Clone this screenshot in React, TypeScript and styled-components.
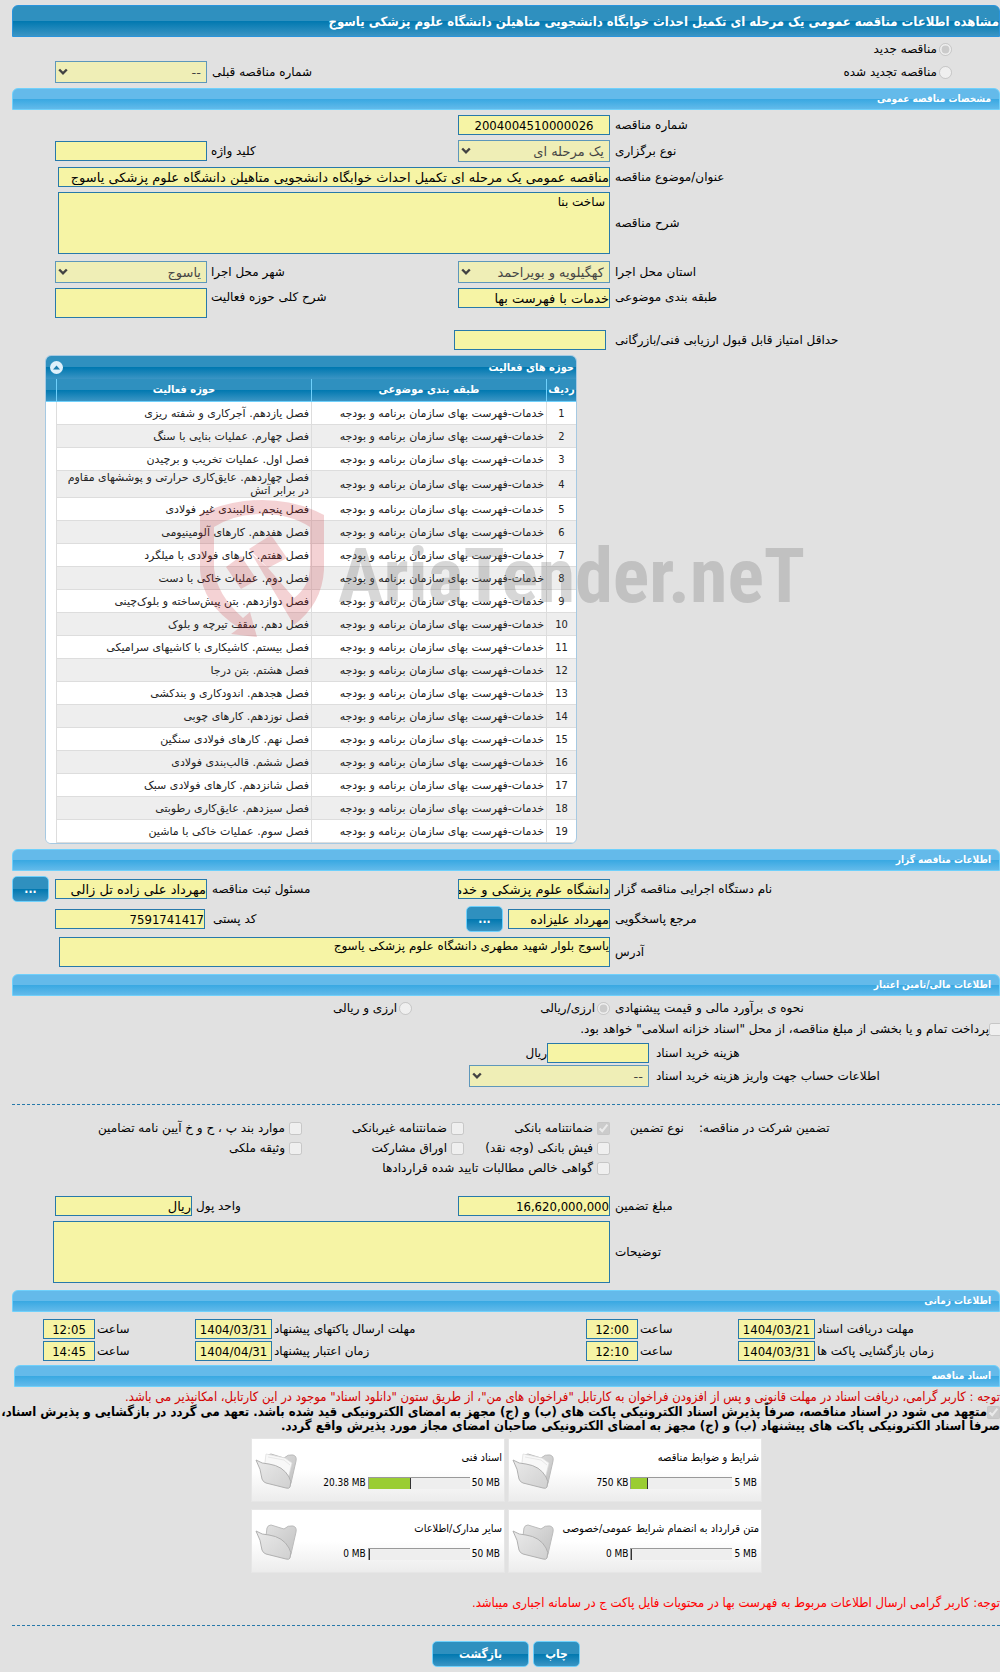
import React, { useId } from 'react';
import styled, { createGlobalStyle, css } from 'styled-components';

const condensed = '"DejaVu Sans Condensed", "DejaVu Sans", Tahoma, sans-serif';
const regular = '"DejaVu Sans", Tahoma, sans-serif';

const GlobalStyle = createGlobalStyle`
  *, *::before, *::after { box-sizing: border-box; }
  body {
    margin: 0;
    background: #e1e1e1;
    color: #000;
    font: 12px/16px ${condensed};
  }
  input[type='radio'], input[type='checkbox'] { margin: 0; flex: none; width: 13px; height: 13px; }
`;

const deepBlue = 'linear-gradient(#2f90bf 50%, #0078b0 50%, #3b95c4)';
const skyBlue = 'linear-gradient(#64baea 50%, #38a8e2 50%, #62baea)';

const Page = styled.main`
  position: relative;
  overflow: hidden;
  padding: 5px 0 5px 12px;
`;

const TitleBar = styled.h1`
  margin: 0;
  height: 32px;
  line-height: 32px;
  font-size: 13px;
  color: #fff;
  white-space: nowrap;
  background: ${deepBlue};
  border: 1px solid #2a94dc;
  border-radius: 6px 6px 0 0;
`;

const SectionBar = styled.h2<{ $inset?: boolean }>`
  margin: 0 0 0 ${(p) => (p.$inset ? 2 : 0)}px;
  height: 22px;
  padding: 0 8px;
  line-height: 20px;
  font-size: 10px;
  color: #fff;
  background: ${skyBlue};
  border: 1px solid #6fd0fb;
  border-radius: 6px 6px 0 0;
`;

const Section = styled.section<{ $top?: number; $bottom?: number }>`
  padding: ${(p) => p.$top ?? 5}px 0 ${(p) => p.$bottom ?? 5}px;
`;

const Row = styled.div<{ $after?: number; $top?: boolean }>`
  display: grid;
  grid-template-columns: minmax(0, 390fr) 152px minmax(0, 251fr) 152px 43px;
  align-items: ${(p) => (p.$top ? 'start' : 'center')};
  margin-bottom: ${(p) => p.$after ?? 5}px;
`;

const Label = styled.label<{ $gap?: number }>`
  text-align: left;
  white-space: nowrap;
  font-family: ${regular};
  font-size: 12px;
  line-height: 18px;
  padding-left: ${(p) => p.$gap ?? 5}px;
`;

const Heading = styled.span`
  white-space: nowrap;
  font-family: ${regular};
  font-size: 12px;
`;

const fieldLook = css`
  display: block;
  margin: 0;
  color: #000;
  background: #f6f4a5;
  border: 1px solid #2779aa;
  border-radius: 0;
  outline: none;
  font-family: ${regular};
  font-size: 13px;
`;

const TextBox = styled.input<{ $width?: number; $center?: boolean; $digits?: boolean }>`
  ${fieldLook}
  flex: none;
  width: ${(p) => (p.$width ? `${p.$width}px` : '100%')};
  height: 20px;
  padding: 0;
  font-family: ${(p) => (p.$digits ? condensed : regular)};
  text-align: ${(p) => (p.$center ? 'center' : 'right')};
`;

const TextArea = styled.textarea<{ $tall?: boolean }>`
  ${fieldLook}
  width: 100%;
  height: ${(p) => (p.$tall ? 62 : 30)}px;
  padding: ${(p) => (p.$tall ? '1px 4px' : '0')};
  font-size: 12px;
  line-height: 16px;
  resize: none;
`;

const Wide = styled.div<{ $left: number }>`
  grid-column: 2 / 6;
  padding-left: ${(p) => p.$left}px;
`;

const SelectFrame = styled.span<{ $width?: number }>`
  position: relative;
  display: block;
  width: ${(p) => (p.$width ? `${p.$width}px` : '100%')};
  opacity: 0.7;
  svg { position: absolute; left: 3px; top: 7px; }
`;

const SelectBox = styled.select`
  ${fieldLook}
  appearance: none;
  width: 100%;
  height: 22px;
  padding: 0 5px;
  opacity: 1;
`;

const Choice = styled.label<{ $gap?: number }>`
  display: flex;
  align-items: center;
  gap: ${(p) => p.$gap ?? 2}px;
  white-space: nowrap;
  font-family: ${regular};
  font-size: 12px;
`;

const Choices = styled.div`
  display: flex;
  height: 20px;
  margin-bottom: 2px;
  padding-right: 48px;
`;

const Button = styled.button<{ $width: number }>`
  width: ${(p) => p.$width}px;
  height: 26px;
  padding: 0;
  flex: none;
  color: #fff;
  font: bold 12px/20px ${condensed};
  background: ${deepBlue};
  border: 1px solid #6fd0fb;
  border-radius: 5px;
`;

const Dashes = styled.hr`
  margin: 0;
  border: 0;
  border-top: 1px dashed #2779aa;
`;

/* activity table */
const Panel = styled.div`
  width: 532px;
  margin: 5px auto 0 33px;
  overflow: hidden;
  background: #fff;
  border: 1px solid #a6c9e2;
  border-radius: 6px;
`;

const PanelTitle = styled.div`
  display: flex;
  align-items: center;
  justify-content: space-between;
  height: 23px;
  padding: 0 2px 0 4px;
  font-size: 11px;
  font-weight: bold;
  color: #fff;
  background: ${deepBlue};
`;

const Collapse = styled.button`
  display: flex;
  width: 13px;
  height: 13px;
  padding: 0;
  align-items: center;
  justify-content: center;
  background: #dff0fb;
  border: 0;
  border-radius: 50%;
`;

const Table = styled.table`
  width: 100%;
  table-layout: fixed;
  border-collapse: separate;
  border-spacing: 0;
  font-family: ${regular};
  font-size: 11px;
  line-height: 13px;
  color: #222;
  th {
    height: 23px;
    padding: 0 0 2px;
    font-family: ${condensed};
    font-size: 11px;
    color: #fff;
    background: ${deepBlue};
    border-left: 1px solid #6fd0fb;
    border-bottom: 1px solid #6fd0fb;
  }
  td {
    height: 23px;
    padding: 0 2px;
    border-left: 1px solid #ddd;
    border-bottom: 1px solid #ddd;
  }
  tbody tr:nth-child(even) td { background: #eee; }
  th:last-child, td:last-child { border-left: 0; }
  tbody td:last-child, tbody tr:nth-child(even) td:last-child { background: #fff; border-bottom: 0; }
  td:first-child { text-align: center; font-family: ${condensed}; }
`;

/* dates */
const DateRow = styled.div`
  display: grid;
  grid-template-columns: minmax(0, 185fr) 77px 100px 52px minmax(0, 314fr) 77px 100px 52px 31px;
  align-items: center;
  margin-bottom: 2px;
`;

/* documents */
const Notice = styled.p<{ $strong?: boolean }>`
  margin: 0;
  color: ${(p) => (p.$strong ? '#f00' : '#d40000')};
  font-size: 13px;
  line-height: 16px;
  white-space: nowrap;
`;

const Pledge = styled.label`
  display: block;
  margin-left: -16px;
  font-size: 13px;
  font-weight: bold;
  line-height: 14px;
  input[type='checkbox'] { vertical-align: bottom; }
`;

const Cards = styled.div`
  display: grid;
  grid-template-columns: 254px 254px;
  gap: 7px 3px;
  margin: 5px 238px 0 0;
`;

const Card = styled.article`
  display: grid;
  grid-template-columns: minmax(0, 1fr) 50px;
  grid-template-rows: 33px 18px;
  height: 64px;
  padding: 2px 2px 0 0;
  background: linear-gradient(#fff 50%, #ececec);
  border: 1px solid #e6e6e6;
  svg { grid-column: 2; grid-row: 1 / 3; align-self: end; justify-self: center; }
`;

const CardTitle = styled.h3`
  margin: 0;
  align-self: center;
  font-size: 11px;
  font-weight: normal;
  white-space: nowrap;
`;

const Usage = styled.div`
  display: flex;
  direction: ltr;
  align-items: center;
  justify-content: flex-end;
  gap: 2px;
  padding-right: 2px;
  font-size: 10px;
  white-space: nowrap;
`;

const Track = styled.span`
  width: 102px;
  height: 12px;
  background: #eee;
  border-top: 1px solid #999;
  border-left: 1px solid #999;
`;

const Fill = styled.span`
  display: block;
  min-width: 1px;
  height: 100%;
  background: #9acd32;
  border-right: 1px solid #333;
`;

const Actions = styled.div`
  display: flex;
  justify-content: center;
  gap: 4px;
  padding: 15px 0 0;
`;

const Watermark = styled.div`
  position: absolute;
  left: 200px;
  top: 500px;
  display: flex;
  direction: ltr;
  pointer-events: none;
`;

const Brand = styled.span`
  margin: 38px 0 0 12px;
  font: bold 76px/76px "Roboto Condensed", Roboto, "Liberation Sans", sans-serif;
  color: rgba(110, 110, 110, 0.28);
`;

function Chevron() {
  return (
    <svg width="10" height="8" viewBox="0 0 10 8" aria-hidden="true">
      <path d="M1.2 1.5 5 5.3 8.8 1.5" fill="none" stroke="#000" strokeWidth="2.4" />
    </svg>
  );
}

function Select({ id, value, width }: { id: string; value: string; width?: number }) {
  return (
    <SelectFrame $width={width}>
      <SelectBox id={id} disabled>
        <option>{value}</option>
      </SelectBox>
      <Chevron />
    </SelectFrame>
  );
}

type TextFieldProps = { label: string; value?: string; center?: boolean; digits?: boolean; gap?: number };

function TextField({ label, value, center, digits, gap }: TextFieldProps) {
  const id = useId();
  return (
    <>
      <Label htmlFor={id} $gap={gap}>{label}</Label>
      <TextBox id={id} readOnly value={value ?? ''} $center={center} $digits={digits} />
    </>
  );
}

function SelectField({ label, value, gap }: { label: string; value: string; gap?: number }) {
  const id = useId();
  return (
    <>
      <Label htmlFor={id} $gap={gap}>{label}</Label>
      <Select id={id} value={value} />
    </>
  );
}

function AreaField({ label, value, tall, left }: { label: string; value?: string; tall?: boolean; left: number }) {
  const id = useId();
  return (
    <>
      <Label htmlFor={id}>{label}</Label>
      <Wide $left={left}>
        <TextArea id={id} readOnly $tall={tall} value={value ?? ''} />
      </Wide>
    </>
  );
}

function Check({ label, checked }: { label: string; checked?: boolean }) {
  return (
    <Choice $gap={4}>
      <input type="checkbox" disabled defaultChecked={checked} />
      {label}
    </Choice>
  );
}

function Folder({ full }: { full: boolean }) {
  return (
    <svg width="46" height="41" viewBox="0 0 46 41" aria-hidden="true">
      <defs>
        <linearGradient id="folderBack" x1="0" y1="0" x2="1" y2="1">
          <stop offset="0" stopColor="#e2e2e2" />
          <stop offset="1" stopColor="#c0c0c0" />
        </linearGradient>
        <linearGradient id="folderFront" x1="0" y1="0" x2="1" y2="1">
          <stop offset="0" stopColor="#eaeaea" />
          <stop offset="1" stopColor="#d0d0d0" />
        </linearGradient>
      </defs>
      <path d="M13 6 Q14 3 17 3 L30 7 Q34 3 39 4 Q43 5 42 10 L37 32 Q36 37 33 36 L10 30 Z" fill="url(#folderBack)" stroke="#bcbcbc" />
      {full && <path d="M12 3 31 7 38 12 33 32 9 28Z" fill="#f8f8f8" stroke="#dcdcdc" strokeWidth="0.7" />}
      {full && <path d="M14 6 30 9 36 14" fill="none" stroke="#e0e0e0" strokeWidth="0.7" />}
      <path d="M2 9 Q8 13 15 13 Q29 15 35 26 Q38 30 36 36 Q35 38 32 37 L12 32 Q9 31 8 28 Q7 18 2 9 Z" fill="url(#folderFront)" stroke="#b0b0b0" />
    </svg>
  );
}

const CATEGORY = 'خدمات-فهرست بهای سازمان برنامه و بودجه';
const ACTIVITIES = [
  'فصل یازدهم. آجرکاری و شفته ریزی',
  'فصل چهارم. عملیات بنایی با سنگ',
  'فصل اول. عملیات تخریب و برچیدن',
  'فصل چهاردهم. عایق‌کاری حرارتی و پوششهای مقاوم در برابر آتش',
  'فصل پنجم. قالببندی غیر فولادی',
  'فصل هفدهم. کارهای آلومینیومی',
  'فصل هفتم. کارهای فولادی با میلگرد',
  'فصل دوم. عملیات خاکی با دست',
  'فصل دوازدهم. بتن پیش‌ساخته و بلوک‌چینی',
  'فصل دهم. سقف تیرچه و بلوک',
  'فصل بیستم. کاشیکاری با کاشیهای سرامیکی',
  'فصل هشتم. بتن درجا',
  'فصل هجدهم. اندودکاری و بندکشی',
  'فصل نوزدهم. کارهای چوبی',
  'فصل نهم. کارهای فولادی سنگین',
  'فصل ششم. قالب‌بندی فولادی',
  'فصل شانزدهم. کارهای فولادی سبک',
  'فصل سیزدهم. عایق‌کاری رطوبتی',
  'فصل سوم. عملیات خاکی با ماشین',
];

const DATES = [
  [['مهلت دریافت اسناد', '1404/03/21', '12:00'], ['مهلت ارسال پاکتهای پیشنهاد', '1404/03/31', '12:05']],
  [['زمان بازگشایی پاکت ها', '1404/03/31', '12:10'], ['زمان اعتبار پیشنهاد', '1404/04/31', '14:45']],
];

const DOCUMENTS = [
  { title: 'شرایط و ضوابط مناقصه', used: '750 KB', total: '5 MB', share: 16 },
  { title: 'اسناد فنی', used: '20.38 MB', total: '50 MB', share: 42 },
  { title: 'متن قرارداد به انضمام شرایط عمومی/خصوصی', used: '0 MB', total: '5 MB', share: 0 },
  { title: 'سایر مدارک/اطلاعات', used: '0 MB', total: '50 MB', share: 0 },
];

const RadioColumn = styled.div`
  display: flex;
  padding-right: 48px;
`;

const RadioRow = styled(Row)`
  grid-template-columns: minmax(0, 542fr) minmax(0, 251fr) 152px 43px;
`;

const PayChoices = styled.div`
  grid-column: 2 / 4;
  display: flex;
  gap: 128px;
`;

const Payment = styled(Choice)`
  margin: 4px -2px 6px 0;
`;

const FeeRow = styled.div<{ $after?: number }>`
  display: grid;
  grid-template-columns: minmax(0, 351fr) minmax(0, 637fr);
  align-items: center;
  margin-bottom: ${(p) => p.$after ?? 2}px;
`;

const Inline = styled.div<{ $gap?: number }>`
  display: flex;
  align-items: center;
  gap: ${(p) => p.$gap ?? 0}px;
`;

const Currency = styled(Inline)`
  grid-column: 3 / 5;
  justify-content: flex-end;
`;

const Guarantee = styled.div`
  display: grid;
  grid-template-columns: minmax(0, 1fr) 598px;
  align-items: start;
  padding: 15px 0 20px;
`;

const GuaranteeLead = styled.div`
  display: flex;
  justify-content: flex-end;
  gap: 15px;
  padding-left: 20px;
`;

const CheckGrid = styled.div`
  display: grid;
  grid-template-columns: 146px 162px 1fr;
  row-gap: 4px;
`;

const SpanCheck = styled.div`
  grid-column: 1 / 4;
`;

export default function App() {
  return (
    <Page dir="rtl" lang="fa">
      <GlobalStyle />
      <TitleBar>مشاهده اطلاعات مناقصه عمومی یک مرحله ای تکمیل احداث خوابگاه دانشجویی متاهیلن دانشگاه علوم پزشکی یاسوج</TitleBar>

      <Section $top={2}>
        <Choices>
          <Choice>
            <input type="radio" name="kind" disabled defaultChecked />
            مناقصه جدید
          </Choice>
        </Choices>
        <RadioRow $after={0}>
          <RadioColumn>
            <Choice>
              <input type="radio" name="kind" disabled />
              مناقصه تجدید شده
            </Choice>
          </RadioColumn>
          <SelectField label="شماره مناقصه قبلی" value="--" />
        </RadioRow>
      </Section>

      <SectionBar>مشخصات مناقصه عمومی</SectionBar>
      <Section>
        <Row><TextField label="شماره مناقصه" value="2004004510000026" center digits /></Row>
        <Row>
          <SelectField label="نوع برگزاری" value="یک مرحله ای" />
          <TextField label="کلید واژه" gap={4} />
        </Row>
        <Row>
          <Label htmlFor="subject">عنوان/موضوع مناقصه</Label>
          <Wide $left={46}>
            <TextBox id="subject" readOnly value="مناقصه عمومی یک مرحله ای تکمیل احداث خوابگاه دانشجویی متاهیلن دانشگاه علوم پزشکی یاسوج" />
          </Wide>
        </Row>
        <Row $after={7}><AreaField label="شرح مناقصه" value="ساخت بنا" tall left={46} /></Row>
        <Row>
          <SelectField label="استان محل اجرا" value="کهگیلویه و بویراحمد" />
          <SelectField label="شهر محل اجرا" value="یاسوج" gap={4} />
        </Row>
        <Row $after={12} $top>
          <TextField label="طبقه بندی موضوعی" value="خدمات با فهرست بها" />
          <Label htmlFor="scope" $gap={4}>شرح کلی حوزه فعالیت</Label>
          <TextArea id="scope" readOnly value="" />
        </Row>
        <Row $after={0}>
          <Label htmlFor="score">حداقل امتیاز قابل قبول ارزیابی فنی/بازرگانی</Label>
          <Inline $gap={4}>
            <span />
            <TextBox id="score" readOnly value="" $width={152} />
          </Inline>
        </Row>
        <Panel>
          <PanelTitle>
            حوزه های فعالیت
            <Collapse aria-label="بستن">
              <svg width="7" height="5" viewBox="0 0 7 5"><path d="M0 4.5 3.5.5 7 4.5Z" fill="#1f7fb0" /></svg>
            </Collapse>
          </PanelTitle>
          <Table>
            <colgroup>
              <col style={{ width: 30 }} />
              <col style={{ width: 235 }} />
              <col />
              <col style={{ width: 10 }} />
            </colgroup>
            <thead>
              <tr><th>ردیف</th><th>طبقه بندی موضوعی</th><th>حوزه فعالیت</th><th /></tr>
            </thead>
            <tbody>
              {ACTIVITIES.map((name, i) => (
                <tr key={name}><td>{i + 1}</td><td>{CATEGORY}</td><td>{name}</td><td /></tr>
              ))}
            </tbody>
          </Table>
        </Panel>
      </Section>

      <SectionBar>اطلاعات مناقصه گزار</SectionBar>
      <Section $bottom={7}>
        <Row $after={4}>
          <TextField label="نام دستگاه اجرایی مناقصه گزار" value="دانشگاه علوم پزشکی و خدمات بهداشتی" />
          <TextField label="مسئول ثبت مناقصه" value="مهرداد علی زاده تل زالی" />
          <Inline $gap={6}><span /><Button $width={37}>...</Button></Inline>
        </Row>
        <Row>
          <Label htmlFor="contact">مرجع پاسخگویی</Label>
          <Inline $gap={5}>
            <TextBox id="contact" readOnly value="مهرداد علیزاده" $width={102} />
            <Button $width={37}>...</Button>
          </Inline>
          <Label htmlFor="postal" $gap={6}>کد پستی</Label>
          <Inline $gap={2}><span /><TextBox id="postal" readOnly value="7591741417" $width={150} $digits /></Inline>
        </Row>
        <Row $after={0}><AreaField label="آدرس" value="یاسوج بلوار شهید مطهری دانشگاه علوم پزشکی یاسوج" left={47} /></Row>
      </Section>

      <SectionBar>اطلاعات مالی/تامین اعتبار</SectionBar>
      <Section $top={3} $bottom={17}>
        <Row $after={0}>
          <Label as="span">نحوه ی برآورد مالی و قیمت پیشنهادی</Label>
          <PayChoices>
            <Choice><input type="radio" name="pay" disabled defaultChecked />ارزی/ریالی</Choice>
            <Choice><input type="radio" name="pay" disabled />ارزی و ریالی</Choice>
          </PayChoices>
        </Row>
        <Payment $gap={0}>
          <input type="checkbox" disabled />
          پرداخت تمام و یا بخشی از مبلغ مناقصه، از محل "اسناد خزانه اسلامی" خواهد بود.
        </Payment>
        <FeeRow>
          <Label htmlFor="fee" $gap={7}>هزینه خرید اسناد</Label>
          <Inline>
            <TextBox id="fee" readOnly value="" $width={102} />
            <Heading>ریال</Heading>
          </Inline>
        </FeeRow>
        <FeeRow $after={0}>
          <Label htmlFor="account" $gap={7}>اطلاعات حساب جهت واریز هزینه خرید اسناد</Label>
          <Select id="account" value="--" width={180} />
        </FeeRow>
      </Section>

      <Dashes />
      <Guarantee>
        <GuaranteeLead>
          <Heading>تضمین شرکت در مناقصه:</Heading>
          <Heading>نوع تضمین</Heading>
        </GuaranteeLead>
        <CheckGrid>
          <Check label="ضمانتنامه بانکی" checked />
          <Check label="ضمانتنامه غیربانکی" />
          <Check label="موارد بند پ ، ح و خ آیین نامه تضامین" />
          <Check label="فیش بانکی (وجه نقد)" />
          <Check label="اوراق مشارکت" />
          <Check label="وثیقه ملکی" />
          <SpanCheck><Check label="گواهی خالص مطالبات تایید شده قراردادها" /></SpanCheck>
        </CheckGrid>
      </Guarantee>
      <Row>
        <TextField label="مبلغ تضمین" value="16,620,000,000" digits />
        <Currency $gap={4}>
          <Label htmlFor="unit" $gap={0}>واحد پول</Label>
          <TextBox id="unit" readOnly value="ریال" $width={137} />
        </Currency>
      </Row>
      <Row $after={7}><AreaField label="توضیحات" tall left={41} /></Row>

      <SectionBar>اطلاعات زمانی</SectionBar>
      <Section $top={7} $bottom={2}>
        {DATES.map((row) => (
          <DateRow key={row[0][0]}>
            {row.map(([label, date, time]) => (
              <React.Fragment key={label}>
                <TextField label={label} value={date} center digits gap={2} />
                <TextField label="ساعت" value={time} center digits gap={2} />
              </React.Fragment>
            ))}
          </DateRow>
        ))}
      </Section>

      <SectionBar $inset>اسناد مناقصه</SectionBar>
      <Section $top={2} $bottom={22}>
        <Notice>توجه : کاربر گرامی، دریافت اسناد در مهلت قانونی و پس از افزودن فراخوان به کارتابل "فراخوان های من"، از طریق ستون "دانلود اسناد" موجود در این کارتابل، امکانپذیر می باشد.</Notice>
        <Pledge>
          <input type="checkbox" disabled defaultChecked />
          متعهد می شود در اسناد مناقصه، صرفاً پذیرش اسناد الکترونیکی پاکت های (ب) و (ج) مجهز به امضای الکترونیکی قید شده باشد. تعهد می گردد در بازگشایی و پذیرش اسناد، صرفاً اسناد الکترونیکی پاکت های پیشنهاد (ب) و (ج) مجهز به امضای الکترونیکی صاحبان امضای مجاز مورد پذیرش واقع گردد.
        </Pledge>
        <Cards>
          {DOCUMENTS.map((doc) => (
            <Card key={doc.title}>
              <CardTitle>{doc.title}</CardTitle>
              <Usage>
                <span>{doc.used}</span>
                <Track><Fill style={{ width: `${doc.share}%` }} /></Track>
                <span>{doc.total}</span>
              </Usage>
              <Folder full={doc.share > 0} />
            </Card>
          ))}
        </Cards>
      </Section>
      <Notice $strong>توجه: کاربر گرامی ارسال اطلاعات مربوط به فهرست بها در محتویات فایل پاکت ج در سامانه اجباری میباشد.</Notice>
      <Section $top={14} $bottom={0}>
        <Dashes />
        <Actions>
          <Button $width={47}>چاپ</Button>
          <Button $width={97}>بازگشت</Button>
        </Actions>
      </Section>

      <Watermark aria-hidden="true">
        <svg width="126" height="138" viewBox="0 0 126 138">
          <g fill="#c8202a" fillOpacity="0.2">
            <path fillRule="evenodd" d="M0 14 Q30 0 62 0 Q96 0 124 15 L124 70 Q122 104 94 125 L51 53 L68 68 L94 98 Q110 86 110 66 L110 27 Q90 14 62 14 Q34 14 14 27 L14 68 Q16 94 43 118 L50 112 L57 137 L31 134 L39 128 Q2 104 0 70 Z" />
            <path d="M26 67 41 56 57 80 41 89Z M49 49 71 35 87 58 68 68Z" />
          </g>
        </svg>
        <Brand>AriaTender.neT</Brand>
      </Watermark>
    </Page>
  );
}
